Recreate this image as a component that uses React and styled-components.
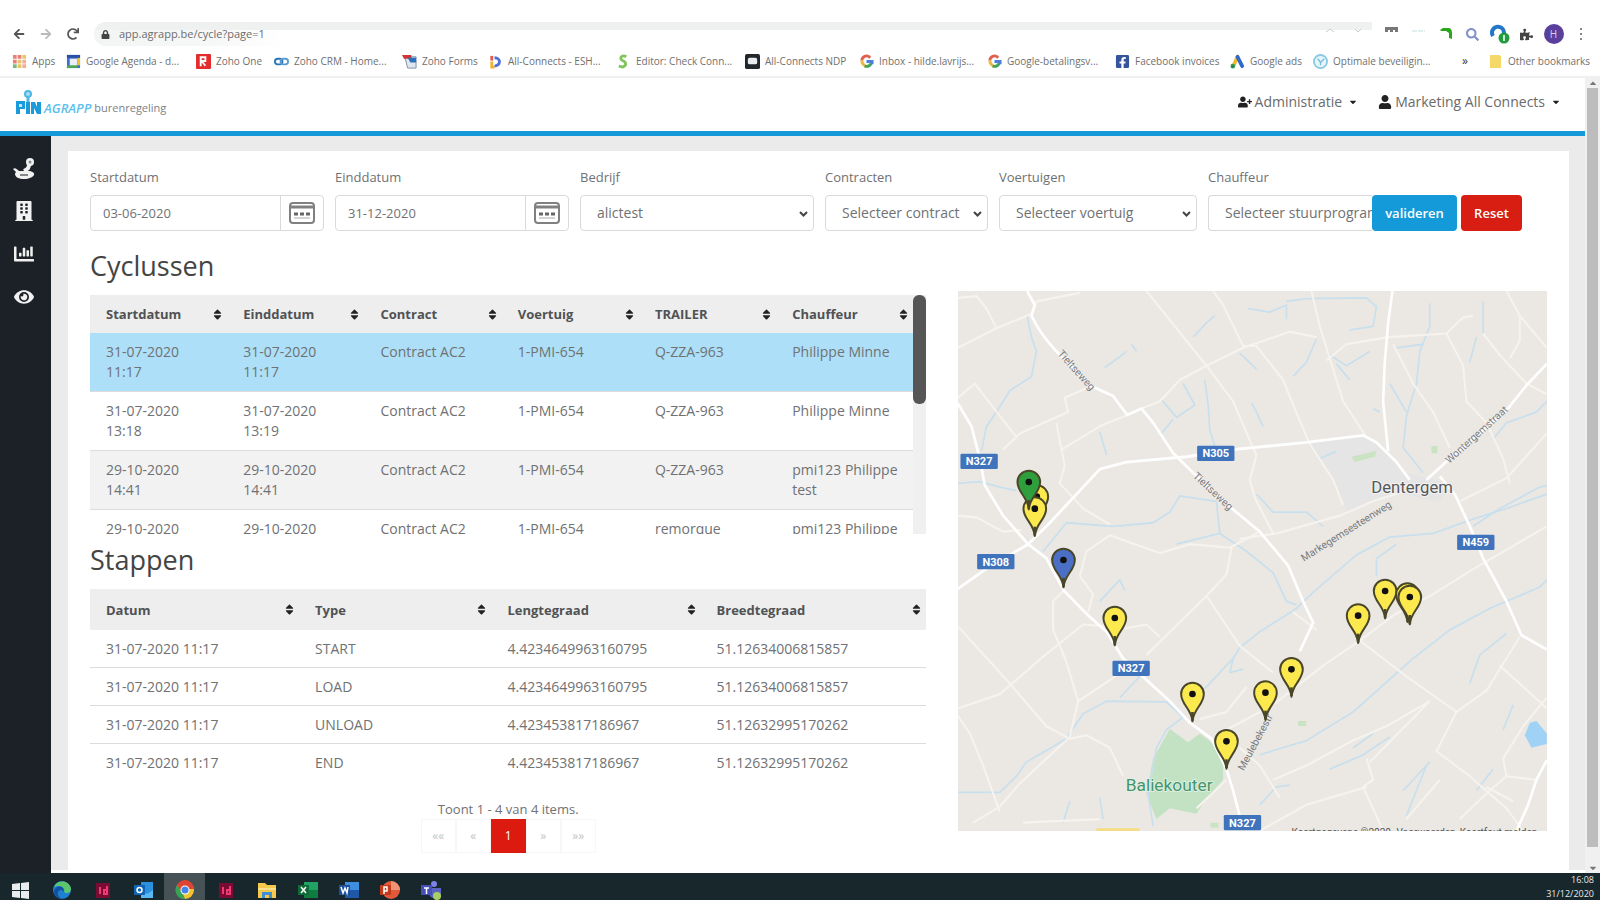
import React from "react";
import styled, { createGlobalStyle, css } from "styled-components";
import {
  FaArrowLeft, FaArrowRight, FaBuilding, FaChartBar, FaEye, FaLock, FaPuzzlePiece,
  FaRedo, FaSearch, FaSort, FaUser, FaUserPlus, FaCaretDown, FaCaretUp, FaFacebookSquare,
} from "react-icons/fa";

const GlobalStyle = createGlobalStyle`
  *, *::before, *::after { box-sizing: border-box; }
  body { margin: 0; background: #fff; font: 14px/20px "Open Sans", "Noto Sans", sans-serif; color: #6f7173; }
  button, input, select { font: inherit; color: inherit; }
  a { color: inherit; text-decoration: none; }
`;

const Screen = styled.div`
  display: flex;
  flex-direction: column;
  height: 100vh;
  min-height: 900px;
  overflow: hidden;
`;

/* ---------- browser ---------- */

const Browser = styled.header`
  padding: 20px 0 2px;
  border-bottom: 2px solid #f0f0f0;
`;

const Toolbar = styled.div`
  display: flex;
  align-items: center;
  height: 28px;
  padding: 0 6px 0 10px;
`;

const IconButton = styled.button`
  display: grid;
  place-items: center;
  flex: none;
  width: 27px;
  height: 24px;
  padding: 0;
  border: 0;
  background: none;
  font-size: 12px;
  color: ${(p) => p.$tone || "#555"};
  &:first-child { width: 18px; margin-right: 4px; }
`;

const Address = styled.label`
  flex: 1;
  display: flex;
  align-items: center;
  gap: 9px;
  height: 24px;
  margin: 0 6px 0 8px;
  padding: 0 8px 0 7px;
  font-size: 9px;
  color: #444;
  background: linear-gradient(#eff1f1, #eff1f1) top / 100% 8px no-repeat,
    linear-gradient(90deg, #f3f4f4 0, #f6f7f7 120px, #fff 190px);
  border-radius: 12px 0 0 12px;
`;

const AddressInput = styled.input`
  flex: 1;
  min-width: 0;
  padding: 0;
  border: 0;
  outline: 0;
  background: none;
  font-size: 11px;
  color: #6d6d6d;
`;

const Avatar = styled.span`
  display: grid;
  place-items: center;
  width: 20px;
  height: 20px;
  border-radius: 50%;
  background: #5b3f9c;
  color: #d8cdf0;
  font-size: 10px;
`;

const Bookmarks = styled.nav`
  display: grid;
  grid-template-columns: 54fr 130fr 78fr 128fr 86fr 128fr 129fr 114fr 128fr 128fr 115fr 83fr 149fr 26fr 112fr;
  align-items: center;
  height: 26px;
  padding-left: 12px;
`;

const Bookmark = styled.a`
  display: flex;
  align-items: center;
  gap: 5px;
  min-width: 0;
  font-size: 10px;
  white-space: nowrap;
  color: #6f6f6f;
  svg { flex: none; width: 15px; height: 15px; }
`;

const More = styled.button`
  justify-self: start;
  padding: 0;
  border: 0;
  background: none;
  font-size: 12px;
  color: #333;
`;

/* ---------- application ---------- */

const Viewport = styled.div`
  flex: 1;
  min-height: 0;
  display: flex;
`;

const Application = styled.div`
  flex: 1;
  min-width: 0;
  display: flex;
  flex-direction: column;
`;

const AppHeader = styled.header`
  display: flex;
  justify-content: space-between;
  align-items: center;
  height: 58px;
  padding: 0 24px 6px 16px;
  border-bottom: 5px solid #149ad9;
`;

const Brand = styled.a`
  display: flex;
  align-items: flex-end;
  gap: 3px;
  font-size: 11px;
  line-height: 12px;
  color: #7c8286;
  svg { display: block; }
  em { font-size: 13px; font-weight: 600; color: #5cc0ec; }
`;

const UserMenus = styled.nav`
  display: flex;
  gap: 20px;
`;

const MenuButton = styled.button`
  display: flex;
  align-items: center;
  gap: 3px;
  padding: 0;
  border: 0;
  background: none;
  color: #6a6a6a;
  svg { color: #222; }
  svg:last-child { margin-left: 3px; font-size: 10px; }
`;

const Workspace = styled.div`
  flex: 1;
  min-height: 0;
  display: flex;
`;

const Sidebar = styled.nav`
  flex: none;
  width: 51px;
  padding-top: 10px;
  background: #1c2127;
`;

const SideLink = styled.a`
  display: grid;
  place-items: center;
  width: 48px;
  height: 43px;
  font-size: 20px;
  color: #f1f1f1;
`;

const Main = styled.main`
  flex: 1;
  min-width: 0;
  display: flex;
  padding: 15px 16px 0 17px;
  background: #ebebeb;
  border-bottom: 3px solid #fff;
`;

const Card = styled.div`
  flex: 1;
  min-width: 0;
  padding: 16px 22px 0;
  background: #fff;
`;

const Filters = styled.form`
  display: grid;
  grid-template-columns: 234fr 234fr 234fr 163fr 198fr 314fr;
  gap: 11px;
  padding-right: 25px;
`;

const Field = styled.div`
  min-width: 0;
  label { display: block; margin-bottom: 8px; font-size: 13px; }
`;

const Control = styled.div`
  position: relative;
  display: flex;
  height: 36px;
`;

const box = css`
  height: 36px;
  border: 1px solid #d9d9d9;
  border-radius: 4px;
  background: #fff;
  outline: 0;
`;

const DateInput = styled.input`
  ${box}
  flex: 1;
  min-width: 0;
  padding: 0 12px;
  font-size: 13px;
  border-radius: 4px 0 0 4px;
`;

const DateButton = styled.button`
  ${box}
  display: grid;
  place-items: center;
  flex: none;
  width: 44px;
  margin-left: -1px;
  padding: 0;
  border-radius: 0 4px 4px 0;
`;

const Select = styled.select`
  ${box}
  appearance: none;
  flex: 1;
  min-width: 0;
  padding: 0 0 0 16px;
  ${(p) => p.$joined && css`border-right: 0; border-radius: 4px 0 0 4px;`}
`;

const Chevron = styled.svg`
  position: absolute;
  right: 6px;
  top: 15px;
  pointer-events: none;
`;

const Action = styled.button`
  flex: none;
  width: ${(p) => p.$width};
  height: 36px;
  padding: 0;
  border: 0;
  border-radius: 4px;
  font-size: 13px;
  font-weight: 600;
  color: #fff;
  background: ${(p) => p.$color};
  & + & { margin-left: 4px; }
`;

const Columns = styled.div`
  display: grid;
  grid-template-columns: 837fr 589fr;
  gap: 32px;
  padding-top: 9px;
`;

const Title = styled.h2`
  margin: 0;
  padding: 9px 0 12px;
  font-size: 27px;
  font-weight: 400;
  line-height: 34px;
  color: #444;
`;

const ScrollArea = styled.div`
  display: flex;
  height: 239px;
  overflow: hidden;
`;

const ScrollTrack = styled.div`
  flex: none;
  width: 13px;
  background: #f0f0f0;
`;

const ScrollThumb = styled.div`
  height: 109px;
  border-radius: 6px;
  background: #565656;
`;

const Table = styled.table`
  flex: 1;
  width: 100%;
  height: max-content;
  table-layout: fixed;
  border-collapse: collapse;
  --head: ${(p) => (p.$steps ? "41px" : "38px")};
  --below: ${(p) => (p.$steps ? "8px" : "9px")};
`;

const HeadCell = styled.th`
  width: ${(p) => p.$width};
  height: var(--head);
  padding: 0 3px 0 16px;
  text-align: left;
  font-size: 13px;
  font-weight: 700;
  color: #505254;
  background: #eee;
`;

const HeadLabel = styled.span`
  display: flex;
  justify-content: space-between;
  align-items: center;
  svg { color: #222; font-size: 13px; }
`;

const Row = styled.tr`
  border-bottom: 1px solid #dcdcdc;
  background: ${(p) => p.$background || "#fff"};
  &:last-child { border-bottom-color: transparent; }
`;

const Cell = styled.td`
  padding: 9px 14px var(--below) 16px;
  vertical-align: top;
`;

const Pager = styled.div`
  display: flex;
  flex-direction: column;
  align-items: center;
  padding-top: 17px;
  font-size: 13px;
`;

const Pages = styled.div`
  display: flex;
`;

const Page = styled.button`
  width: 35px;
  height: 34px;
  padding: 0;
  border: 1px solid ${(p) => (p.$current ? "#dc1a10" : "#f7f7f7")};
  background: ${(p) => (p.$current ? "#dc1a10" : "#fff")};
  color: ${(p) => (p.$current ? "#fff" : "#c4c4c4")};
  font-size: 12px;
`;

const MapFrame = styled.div`
  height: 540px;
  margin-top: 51px;
  overflow: hidden;
  background: #ebe8e4;
  svg { display: block; width: 100%; height: 100%; }
`;

const PageScroll = styled.div`
  flex: none;
  display: flex;
  flex-direction: column;
  align-items: center;
  width: 15px;
  background: #f0f0f0;
  font-size: 10px;
  color: #777;
`;

const PageThumb = styled.div`
  flex: 1;
  width: 11px;
  margin-bottom: 16px;
  background: #bdbdbd;
`;

/* ---------- taskbar ---------- */

const Taskbar = styled.footer`
  flex: none;
  display: flex;
  height: 27px;
  background: #18272c;
  overflow: hidden;
`;

const Task = styled.button`
  display: grid;
  place-items: center;
  width: 41px;
  height: 33px;
  padding: 0;
  border: 0;
  background: ${(p) => (p.$active ? "#465256" : "none")};
  svg { width: 20px; height: 20px; }
`;

const Clock = styled.time`
  margin-left: auto;
  padding-right: 6px;
  text-align: right;
  font-size: 9px;
  line-height: 14px;
  color: #e4e8e9;
`;

/* ---------- drawings ---------- */

const MARKS = {
  apps: <><rect x="1" y="1" width="14" height="14" fill="#fff" /><path d="M1 1h4v4H1zM6 1h4v4H6zM1 6h4v4H1z" fill="#e88078" /><path d="M11 1h4v4h-4zM6 6h4v4H6zM6 11h4v4H6z" fill="#e9c46a" /><path d="M1 11h4v4H1z" fill="#7cba7c" /><path d="M11 6h4v4h-4zM11 11h4v4h-4z" fill="#f0b095" /></>,
  agenda: <><path d="M1 1h14v14H1z" fill="#3d6fd1" /><path d="M4 5h8v8H4z" fill="#e9eef7" /><path d="M12 4h3v8h-3z" fill="#f3c12f" /><path d="M1 12h11v3H1z" fill="#4ea65a" /><path d="M1 1h14v3H1z" fill="#2a4fa0" /></>,
  one: <><rect width="16" height="16" rx="1" fill="#e32c2c" /><path d="M5 13V3.500h5v4H6l4 5" stroke="#fff" strokeWidth="2" fill="none" /></>,
  crm: <><rect x="1" y="5" width="8" height="6" rx="3" fill="none" stroke="#2a75b8" strokeWidth="2" /><rect x="7" y="5" width="8" height="6" rx="3" fill="none" stroke="#5b9bd0" strokeWidth="2" /></>,
  forms: <><path d="M3 3h12v12H6z" fill="#dfe6ee" stroke="#7c8ea8" /><path d="M0 1h10v4H2z" fill="#d13434" /><path d="M6 4h9v5H9z" fill="#2b70bd" /></>,
  connects: <g fill="none" strokeWidth="3"><path d="M4 2v5" stroke="#e05a4a" /><path d="M4 8v6h3" stroke="#f0b429" /><path d="M7 4c7 0 7 8 0 9" stroke="#4f71d8" /></g>,
  editor: <path d="M11 3C6 0 3 5 7 7s5 5 0 7l-4-1" fill="none" stroke="#82c45c" strokeWidth="3" />,
  ndp: <><rect width="16" height="16" rx="2" fill="#22272b" /><rect x="3" y="4" width="10" height="7" rx="2" fill="#e8ecee" /></>,
  google: <g fill="none" strokeWidth="3"><path d="M12 4C8 0 3 3 3 7" stroke="#e0604f" /><path d="M3 7c0 3 2 5 4 6" stroke="#efb73d" /><path d="M6 13c4 1 6-1 7-3" stroke="#41a45b" /><path d="M8 8h6v3" stroke="#4c7fe0" /></g>,
  ads: <g strokeLinecap="round" strokeWidth="4"><path d="M8 3L4 12" stroke="#f2b92e" /><path d="M8 3l5 10" stroke="#3268c9" /><circle cx="3" cy="13" r="1" stroke="#2f9850" strokeWidth="3" /></g>,
  optimal: <><circle cx="8" cy="8" r="7" fill="#e8f6fb" stroke="#8acbe3" strokeWidth="2" /><path d="M5 5l3 4 4-4M8 9v3" stroke="#73bcdc" strokeWidth="1.500" fill="none" /></>,
  folder: <path d="M2 1h10l2 2v12H2z" fill="#f6d869" />,
};

const Mark = ({ name }) =>
  name === "facebook" ? (
    <FaFacebookSquare color="#35549b" />
  ) : (
    <svg viewBox="0 0 16 16" aria-hidden="true">{MARKS[name]}</svg>
  );

const RouteIcon = () => (
  <svg width="24" height="24" viewBox="0 0 24 24" aria-hidden="true">
    <circle cx="18" cy="6" r="4" fill="#f1f1f1" />
    <circle cx="18" cy="6" r="1.500" fill="#8a8d90" />
    <path d="M17 8c0 4-1 5-5 7" stroke="#f1f1f1" strokeWidth="4" fill="none" />
    <path d="M1 13c2-2 4 0 6 2h9c4 0 7 2 6 4s-5 4-10 4-9-2-9-5c0-1 1-2 1-2z" fill="#f1f1f1" />
    <path d="M8 19h8" stroke="#84888b" strokeWidth="2" />
  </svg>
);

const CalendarIcon = () => (
  <svg width="26" height="22" viewBox="0 0 26 22" aria-hidden="true">
    <rect x="1" y="1" width="24" height="20" rx="3" fill="#fff" stroke="#808080" strokeWidth="2" />
    <path d="M1 5h24" stroke="#808080" strokeWidth="3" />
    <path d="M5 12h4M11 12h4M17 12h4" stroke="#666" strokeWidth="3" />
    <path d="M5 16h16" stroke="#d5d5d5" strokeWidth="2" />
  </svg>
);

const BrandMark = () => (
  <svg width="25" height="24" viewBox="0 0 25 24" aria-hidden="true">
    <circle cx="12" cy="4" r="3" fill="#a9dcf3" stroke="#4eb6e4" strokeWidth="2" />
    <path d="M12 8v5" stroke="#4eb6e4" strokeWidth="3" />
    <path d="M0 11h9v8H4v5H0zM10 12h4v12h-4zM15 12h4l2 5v-5h4v12h-4l-3-6v6h-3z" fill="#1c9bdb" />
    <path d="M3 14h3v3H3z" fill="#bfe5f7" />
  </svg>
);

const TASKS = [
  ["Start", <path d="M1 4l8-1v7H1zM10 3l8-1v8h-8zM1 11h8v7l-8-1zM10 11h8v8l-8-1z" fill="#e9eded" />],
  ["Edge", <><circle cx="10" cy="10" r="9" fill="#1f7fd0" /><path d="M2 7C5-1 18 0 19 9c0 4-5 5-7 3 2-4-4-8-10-5z" fill="#5cc66a" /><path d="M12 12c-3-4-7-1-6 3 1 3 4 4 7 4-6 1-11-3-11-8 2-6 10-6 10 1z" fill="#1351a0" /></>],
  ["InDesign", <><rect x="3" y="3" width="14" height="15" fill="#7a0b32" /><path d="M7 7v7M14 6v8h-3v-4h3" stroke="#ee3b73" strokeWidth="2" fill="none" /></>],
  ["Outlook", <><rect x="7" y="2" width="12" height="16" fill="#2b91df" /><path d="M7 10l6 4 6-4v8H7z" fill="#58b8f2" /><rect x="0" y="5" width="11" height="10" fill="#1163b4" /><circle cx="5.500" cy="10" r="2.500" stroke="#fff" strokeWidth="1.500" fill="none" /></>],
  ["Chrome", <><circle cx="10" cy="10" r="9" fill="#f4c430" /><path d="M2 5a9 9 0 0 1 17 4h-9l-4 3z" fill="#df4334" /><path d="M2 5l6 9 2 5A9 9 0 0 1 2 5z" fill="#37a455" /><circle cx="10" cy="10" r="4.500" fill="#fff" /><circle cx="10" cy="10" r="3.500" fill="#4384e8" /></>],
  ["InDesign 2", <><rect x="3" y="3" width="14" height="15" fill="#7a0b32" /><path d="M7 7v7M14 6v8h-3v-4h3" stroke="#ee3b73" strokeWidth="2" fill="none" /></>],
  ["Verkenner", <><path d="M1 3h7l2 2h9v13H1z" fill="#f5c94c" /><path d="M1 8h18v2H1z" fill="#fbe08b" /><path d="M5 18v-6h10v6h-3v-3H8v3z" fill="#3f8fd1" /></>],
  ["Excel", <><rect x="6" y="2" width="14" height="16" fill="#21a366" /><path d="M6 10h14v8H6z" fill="#107c41" /><rect x="0" y="5" width="11" height="10" fill="#0e6b38" /><path d="M3 7l5 6M8 7l-5 6" stroke="#fff" strokeWidth="1.500" /></>],
  ["Word", <><rect x="6" y="2" width="14" height="16" fill="#3f8fe0" /><path d="M6 10h14v8H6z" fill="#2058a8" /><rect x="0" y="5" width="11" height="10" fill="#1b4f9c" /><path d="M2 7l2 6 2-5 2 5 1-6" stroke="#fff" strokeWidth="1.500" fill="none" /></>],
  ["PowerPoint", <><circle cx="11" cy="10" r="9" fill="#e2593a" /><path d="M11 1a9 9 0 0 1 9 9h-9z" fill="#f29275" /><rect x="0" y="5" width="11" height="10" fill="#c13b1b" /><path d="M4 14V7h3v4H4" stroke="#fff" strokeWidth="1.500" fill="none" /></>],
  ["Teams", <><circle cx="13" cy="4" r="3" fill="#7b83eb" /><path d="M7 8h13v6c0 4-8 6-11 2z" fill="#5a62c3" /><rect x="0" y="5" width="11" height="10" fill="#464eb8" /><path d="M3 8h5M5.500 8v6" stroke="#fff" strokeWidth="1.500" /><circle cx="16" cy="16" r="4" fill="#a8d060" /></>],
];

const MAIN_ROADS = [
  "M262 31L285 70L275 100Q300 150 345 195L450 295L520 325L562 378L605 360L640 400L700 485L760 540L870 635L960 705L1045 800L1090 900L1120 960L1080 1040",
  "M54 345L95 410L120 500L135 575L190 660L265 740L320 780L372 870L440 935L500 985L550 1060L620 1120L690 1180L750 1240L815 1285L860 1370L880 1430L905 1520",
  "M265 740L330 680L480 530L560 510L740 495L900 473L1100 455L1270 435L1310 455L1370 510L1410 560",
  "M54 865L130 815L265 740",
  "M1358 31L1345 120L1335 230L1330 340L1345 480",
  "M1460 560L1530 500L1700 365L1760 295L1821 235",
  "M1500 550L1545 600L1590 690L1630 780L1700 900L1745 995L1821 1035",
  "M1821 1345L1790 1400L1765 1470L1730 1543",
];

const MINOR_ROADS = [
  "M54 190L170 135L275 95L290 60L420 36",
  "M54 50L110 45L140 80L170 135",
  "M54 330L105 290L175 375L230 440",
  "M190 475L240 430L385 370L375 330L460 295",
  "M562 378L480 410L365 475L350 400M365 475L375 520L360 570L430 640L510 685",
  "M605 360L660 340L720 280L800 240L910 190L1050 145L1130 160",
  "M620 31L680 100L800 240L880 340L935 460L950 490L930 560L945 610L1000 710",
  "M820 31L850 70L910 185L950 185L1030 280L1060 350L1110 460L1180 560L1210 630",
  "M1115 31L1140 130L1170 220L1210 340L1280 440",
  "M1160 225L1220 180L1345 160L1520 150L1570 105L1600 100",
  "M1520 150L1570 240L1580 340L1640 400L1690 500L1710 570",
  "M1360 180L1420 290L1480 370L1530 470",
  "M1700 31L1740 100L1821 190M1630 150L1680 210L1760 290L1821 320",
  "M1740 105L1740 170L1710 220",
  "M420 830L440 760L510 715L600 745L660 765L750 740L870 750L960 705",
  "M420 830L460 880L445 930",
  "M54 660L110 665L190 705L245 700",
  "M620 1050L800 885L860 825L875 750M800 885L900 1025L1000 1100",
  "M54 970L200 1120L320 1250L390 1285L440 1275L510 1310L550 1390",
  "M54 1200L180 1160L310 1055L430 965L560 975L620 965L660 1000",
  "M372 870L340 900L340 980L380 1070L415 1180L390 1280L240 1410L180 1475L100 1520",
  "M415 1180L560 1090L600 1100M54 1220L90 1270L130 1360L180 1490",
  "M780 1230L860 1210L920 1140M840 1270L900 1240L1000 1190L1150 1080L1260 1010L1360 940L1480 880L1600 810L1821 690",
  "M1260 1010L1400 1110L1550 1210M1060 930L1130 980",
  "M900 725L1010 710L1200 660L1300 620L1400 590M1560 620L1700 555L1821 430",
  "M1000 1400L1100 1360L1240 1290L1340 1250L1470 1180M1290 1350L1470 1180",
  "M1550 1210L1490 1320L1590 1390L1700 1480L1750 1543M1550 1210L1640 1150L1740 1000",
  "M1680 1080L1821 1200M1821 1170L1750 1250L1690 1340L1700 1390L1790 1400",
  "M1280 1340L1300 1400L1270 1420L1330 1543M960 1543L1100 1470L1280 1420",
  "M1400 1510L1500 1400M1560 1510L1650 1430L1700 1390M1640 1420L1720 1460",
  "M900 1310L960 1360L1020 1450M770 1480L860 1400M250 1520L480 1510",
];

const STREAMS = [
  "M262 100L275 160L290 200L275 270L210 310L170 370L140 410L125 480",
  "M54 570L120 565L180 580L230 590",
  "M495 245L540 215L560 200M575 180L590 200",
  "M665 335L710 385L765 350L730 290M795 280L805 350L810 420L825 465M665 430L700 390",
  "M760 160L800 120L825 100M480 425L500 490",
  "M310 760L380 680L520 690L640 680L690 650L720 605L830 620L840 710L710 740",
  "M840 710L920 760L1000 820L1040 900L1070 910",
  "M480 900L540 840L555 870",
  "M54 1435L180 1435L230 1390L260 1350L380 1285L430 1215L500 1180L680 1182L730 1225L680 1260L650 1310L625 1440L640 1530",
  "M730 1180L800 1140L880 1060L900 1030L960 985L1070 920L1120 875L1250 770L1350 720L1480 710L1600 670L1700 640L1821 600",
  "M880 1060L870 1100L910 1090M540 1170L600 1110",
  "M925 80L990 90L1040 70L1040 110M1040 60L1100 52L1280 50L1310 75L1300 130L1230 140",
  "M900 205L950 250M1170 210L1220 240L1290 200M1190 235L1230 280M1130 165L1100 230L1060 270",
  "M1470 65L1470 130L1440 200L1430 290L1400 380L1390 470L1450 540",
  "M1350 290L1400 370M1370 190L1450 180M1630 60L1630 150M1590 230L1610 160",
  "M1660 445L1700 400L1790 370L1821 340M1600 690L1680 640L1800 580L1821 575",
  "M1150 690L1100 650L1000 650L950 600M1140 500L1190 480",
  "M960 1330L1100 1290L1240 1210L1360 1110L1420 1060L1530 980L1650 920L1800 860L1821 840",
  "M1590 1130L1620 1050L1700 990M1170 1370L1270 1330L1350 1280M1390 1430L1470 1350",
  "M1240 1310L1300 1270M1400 1500L1460 1360M1610 1430L1660 1370M1720 1190L1690 1260",
  "M935 345L950 370L970 410M1300 360L1320 370M370 1520L390 1460M480 1450L490 1510",
  "M960 1470L1010 1420L1050 1415M1310 830L1310 780L1370 740",
];

const SHIELDS = [["N327", 118, 544], ["N305", 828, 520], ["N308", 168, 845], ["N327", 574, 1165], ["N459", 1608, 787], ["N327", 908, 1628]];

const STREETS = [
  ["Tieltseweg", 352, 222, 48], ["Tieltseweg", 758, 590, 43],
  ["Markegemsesteenweg", 1092, 845, -32], ["Wontergemstraat", 1528, 552, -42], ["Meulebekestr", 912, 1474, -62],
];

const YELLOW = "#fbe94e";
const PINS = [
  [291, 650, YELLOW], [285, 686, YELLOW], [267, 606, "#2f9e3c"], [371, 840, "#4a6fc4"], [525, 1014, YELLOW],
  [758, 1242, YELLOW], [860, 1384, YELLOW], [977, 1238, YELLOW], [1055, 1168, YELLOW], [1255, 1007, YELLOW],
  [1336, 933, YELLOW], [1403, 944, YELLOW], [1410, 951, YELLOW],
];

const CycleMap = () => (
  <svg viewBox="54 33 1767 1620" preserveAspectRatio="xMidYMid slice" role="img" aria-label="Kaart" fontFamily="Roboto, sans-serif">
    <g transform="scale(1 1.071)" fill="none" strokeLinejoin="round">
      <path d="M1100 455L1270 435L1320 460L1400 540L1540 570L1500 620L1380 600L1220 650L1180 560Z" fill="#e6e5e5" />
      <path d="M690 1258L745 1295L780 1270L850 1320L850 1400L790 1465L770 1495L690 1480L650 1510L620 1440L640 1340Z" fill="#c3e2c3" />
      <path d="M1235 495L1310 478L1305 495L1245 510ZM1475 465h18v20h-18zM1075 1235h24v14h-24zM1105 1090l20 18M812 1520h24v14h-24z" fill="#c9e3c3" />
      <path d="M1755 1275L1770 1240L1790 1235L1821 1270V1300L1775 1310Z" fill="#9fd2f5" />
      {STREAMS.map((d) => <path key={d} d={d} stroke="#c8dfed" strokeWidth="5" />)}
      {MINOR_ROADS.map((d) => <path key={d} d={d} stroke="#f6f3ee" strokeWidth="6" />)}
      {MAIN_ROADS.map((d) => <path key={d} d={d} stroke="#fefefe" strokeWidth="8" />)}
      <path d="M470 1540H600" stroke="#f6dd85" strokeWidth="8" />
    </g>
    {STREETS.map(([name, x, y, turn]) => (
      <text key={name + x} transform={`translate(${x} ${y}) rotate(${turn})`} fontSize="31" fill="#777a7e">{name}</text>
    ))}
    {SHIELDS.map(([name, x, y]) => (
      <g key={name + y}>
        <rect x={x - 56} y={y - 23} width="112" height="46" rx="4" fill="#3f74bd" />
        <text x={x} y={y + 12} textAnchor="middle" fontSize="33" fontWeight="700" fill="#fff">{name}</text>
      </g>
    ))}
    <text x="1417" y="638" textAnchor="middle" fontSize="50" fill="#55585b" stroke="#f3f2f0" strokeWidth="6" paintOrder="stroke">Dentergem</text>
    <text x="688" y="1532" textAnchor="middle" fontSize="52" fill="#43966a" stroke="#e6f1e6" strokeWidth="5" paintOrder="stroke">Baliekouter</text>
    {PINS.map(([x, y, color]) => (
      <g key={`${x}-${y}`} transform={`translate(${x} ${y})`}>
        <path d="M0 82C-3 44-34 32-34 0A34 34 0 1 1 34 0C34 32 3 44 0 82Z" fill={color} stroke="#4a4729" strokeWidth="6" strokeLinejoin="round" />
        <path d="M0 54V80" stroke="#4a4729" strokeWidth="8" />
        <circle r="10" fill="#111" />
      </g>
    ))}
    <g fontSize="30" fill="#555">
      <text x="1055" y="1669">Kaartgegevens ©2020</text>
      <text x="1370" y="1669">Voorwaarden</text>
      <text x="1560" y="1669">Kaartfout melden</text>
    </g>
  </svg>
);

/* ---------- data ---------- */

const BOOKMARKS = [
  ["apps", "Apps"], ["agenda", "Google Agenda - d..."], ["one", "Zoho One"], ["crm", "Zoho CRM - Home..."],
  ["forms", "Zoho Forms"], ["connects", "All-Connects - ESH..."], ["editor", "Editor: Check Conn..."],
  ["ndp", "All-Connects NDP"], ["google", "Inbox - hilde.lavrijs..."], ["google", "Google-betalingsv..."],
  ["facebook", "Facebook invoices"], ["ads", "Google ads"], ["optimal", "Optimale beveiligin..."],
];

const CYCLE_HEADS = ["Startdatum", "Einddatum", "Contract", "Voertuig", "TRAILER", "Chauffeur"];
const CYCLES = [
  ["31-07-2020 11:17", "31-07-2020 11:17", "Contract AC2", "1-PMI-654", "Q-ZZA-963", "Philippe Minne"],
  ["31-07-2020 13:18", "31-07-2020 13:19", "Contract AC2", "1-PMI-654", "Q-ZZA-963", "Philippe Minne"],
  ["29-10-2020 14:41", "29-10-2020 14:41", "Contract AC2", "1-PMI-654", "Q-ZZA-963", "pmi123 Philippe test"],
  ["29-10-2020 14:41", "29-10-2020 14:41", "Contract AC2", "1-PMI-654", "remorque", "pmi123 Philippe test"],
];
const CYCLE_COLORS = ["#ade0f8", "#fff", "#f2f2f2", "#fff"];

const STEP_HEADS = [["Datum", "25%"], ["Type", "23%"], ["Lengtegraad", "25%"], ["Breedtegraad", "27%"]];
const STEPS = [
  ["31-07-2020 11:17", "START", "4.4234649963160795", "51.12634006815857"],
  ["31-07-2020 11:17", "LOAD", "4.4234649963160795", "51.12634006815857"],
  ["31-07-2020 11:17", "UNLOAD", "4.423453817186967", "51.12632995170262"],
  ["31-07-2020 11:17", "END", "4.423453817186967", "51.12632995170262"],
];

const Head = ({ label, width }) => (
  <HeadCell $width={width} scope="col"><HeadLabel>{label}<FaSort /></HeadLabel></HeadCell>
);

const DateField = ({ id, label, value }) => (
  <Field>
    <label htmlFor={id}>{label}</label>
    <Control>
      <DateInput id={id} defaultValue={value} />
      <DateButton type="button" aria-label={`${label} kiezen`}><CalendarIcon /></DateButton>
    </Control>
  </Field>
);

const SelectField = ({ id, label, value, children }) => (
  <Field>
    <label htmlFor={id}>{label}</label>
    <Control>
      <Select id={id} $joined={Boolean(children)}><option>{value}</option></Select>
      {children || (
        <Chevron width="9" height="8" viewBox="0 0 9 8" aria-hidden="true">
          <path d="M1 2l3.500 3.500L8 2" fill="none" stroke="#444" strokeWidth="2" />
        </Chevron>
      )}
    </Control>
  </Field>
);

export default function App() {
  return (
    <Screen>
      <GlobalStyle />
      <Browser>
        <Toolbar>
          <IconButton aria-label="Terug"><FaArrowLeft /></IconButton>
          <IconButton aria-label="Vooruit" $tone="#bbb"><FaArrowRight /></IconButton>
          <IconButton aria-label="Vernieuwen"><FaRedo /></IconButton>
          <Address>
            <FaLock />
            <AddressInput aria-label="Adres" defaultValue="app.agrapp.be/cycle?page=1" />
            <svg width="40" height="14" aria-hidden="true"><path d="M2 5l4-3 4 3M31 2l3 3 3-3" fill="none" stroke="#c9cccc" /></svg>
          </Address>
          <IconButton aria-label="Extensie" $tone="#777"><svg width="13" height="14"><path d="M0 0h13v5h-3V3H8v2H5V3H3v2H0z" fill="currentColor" /></svg></IconButton>
          <IconButton aria-label="Extensie" $tone="#bfe0dc"><svg width="13" height="14"><path d="M0 4h13" stroke="currentColor" strokeDasharray="5 1" /></svg></IconButton>
          <IconButton aria-label="Evernote"><svg width="14" height="16"><path d="M1 4l3-2h5c3 0 4 2 4 5v6l-3-1V7L7 5H2z" fill="#2aa51c" /></svg></IconButton>
          <IconButton aria-label="Zoeken" $tone="#8290cc"><FaSearch size="13" /></IconButton>
          <IconButton aria-label="Synchroniseren"><svg width="20" height="20"><path d="M3 12a6 6 0 1 1 11-3" fill="none" stroke="#2277c8" strokeWidth="4" /><circle cx="14" cy="14" r="5.500" fill="#249a3e" /><path d="M14 11v6" stroke="#c7efcf" strokeWidth="2" /></svg></IconButton>
          <IconButton aria-label="Extensies" $tone="#444"><FaPuzzlePiece size="13" /></IconButton>
          <IconButton aria-label="Profiel"><Avatar>H</Avatar></IconButton>
          <IconButton aria-label="Menu"><svg width="4" height="14" fill="#888"><path d="M1 1h2v2H1zM1 6h2v2H1zM1 11h2v2H1z" /></svg></IconButton>
        </Toolbar>
        <Bookmarks aria-label="Bladwijzers">
          {BOOKMARKS.map(([icon, label]) => (
            <Bookmark key={label} href="#"><Mark name={icon} />{label}</Bookmark>
          ))}
          <More aria-label="Meer bladwijzers">»</More>
          <Bookmark href="#"><Mark name="folder" />Other bookmarks</Bookmark>
        </Bookmarks>
      </Browser>

      <Viewport>
        <Application>
          <AppHeader>
            <Brand href="#"><BrandMark /><em>AGRAPP</em><span>burenregeling</span></Brand>
            <UserMenus>
              <MenuButton><FaUserPlus />Administratie<FaCaretDown /></MenuButton>
              <MenuButton><FaUser />Marketing All Connects<FaCaretDown /></MenuButton>
            </UserMenus>
          </AppHeader>
          <Workspace>
            <Sidebar>
              <SideLink href="#" aria-label="Cyclussen"><RouteIcon /></SideLink>
              <SideLink href="#" aria-label="Bedrijven"><FaBuilding /></SideLink>
              <SideLink href="#" aria-label="Rapporten"><FaChartBar /></SideLink>
              <SideLink href="#" aria-label="Overzicht"><FaEye /></SideLink>
            </Sidebar>
            <Main>
              <Card>
                <Filters onSubmit={(e) => e.preventDefault()}>
                  <DateField id="start" label="Startdatum" value="03-06-2020" />
                  <DateField id="end" label="Einddatum" value="31-12-2020" />
                  <SelectField id="company" label="Bedrijf" value="alictest" />
                  <SelectField id="contract" label="Contracten" value="Selecteer contract" />
                  <SelectField id="vehicle" label="Voertuigen" value="Selecteer voertuig" />
                  <SelectField id="driver" label="Chauffeur" value="Selecteer stuurprogramma">
                    <Action $width="85px" $color="#149ad9">valideren</Action>
                    <Action type="reset" $width="61px" $color="#d81e12">Reset</Action>
                  </SelectField>
                </Filters>
                <Columns>
                  <div>
                    <Title>Cyclussen</Title>
                    <ScrollArea>
                      <Table>
                        <thead><tr>{CYCLE_HEADS.map((h) => <Head key={h} label={h} />)}</tr></thead>
                        <tbody>
                          {CYCLES.map((row, i) => (
                            <Row key={i} $background={CYCLE_COLORS[i]}>{row.map((c, j) => <Cell key={j}>{c}</Cell>)}</Row>
                          ))}
                        </tbody>
                      </Table>
                      <ScrollTrack><ScrollThumb /></ScrollTrack>
                    </ScrollArea>
                    <Title>Stappen</Title>
                    <Table $steps>
                      <thead><tr>{STEP_HEADS.map(([h, w]) => <Head key={h} label={h} width={w} />)}</tr></thead>
                      <tbody>
                        {STEPS.map((row, i) => (
                          <Row key={i}>{row.map((c, j) => <Cell key={j}>{c}</Cell>)}</Row>
                        ))}
                      </tbody>
                    </Table>
                    <Pager>
                      <span>Toont 1 - 4 van 4 items.</span>
                      <Pages>
                        <Page aria-label="Eerste">««</Page>
                        <Page aria-label="Vorige">«</Page>
                        <Page $current>1</Page>
                        <Page aria-label="Volgende">»</Page>
                        <Page aria-label="Laatste">»»</Page>
                      </Pages>
                    </Pager>
                  </div>
                  <MapFrame><CycleMap /></MapFrame>
                </Columns>
              </Card>
            </Main>
          </Workspace>
        </Application>
        <PageScroll><FaCaretUp /><PageThumb /><FaCaretDown /></PageScroll>
      </Viewport>

      <Taskbar>
        {TASKS.map(([name, drawing]) => (
          <Task key={name} aria-label={name} $active={name === "Chrome"}>
            <svg viewBox="0 0 20 20" aria-hidden="true">{drawing}</svg>
          </Task>
        ))}
        <Clock>16:08<br />31/12/2020</Clock>
      </Taskbar>
    </Screen>
  );
}
